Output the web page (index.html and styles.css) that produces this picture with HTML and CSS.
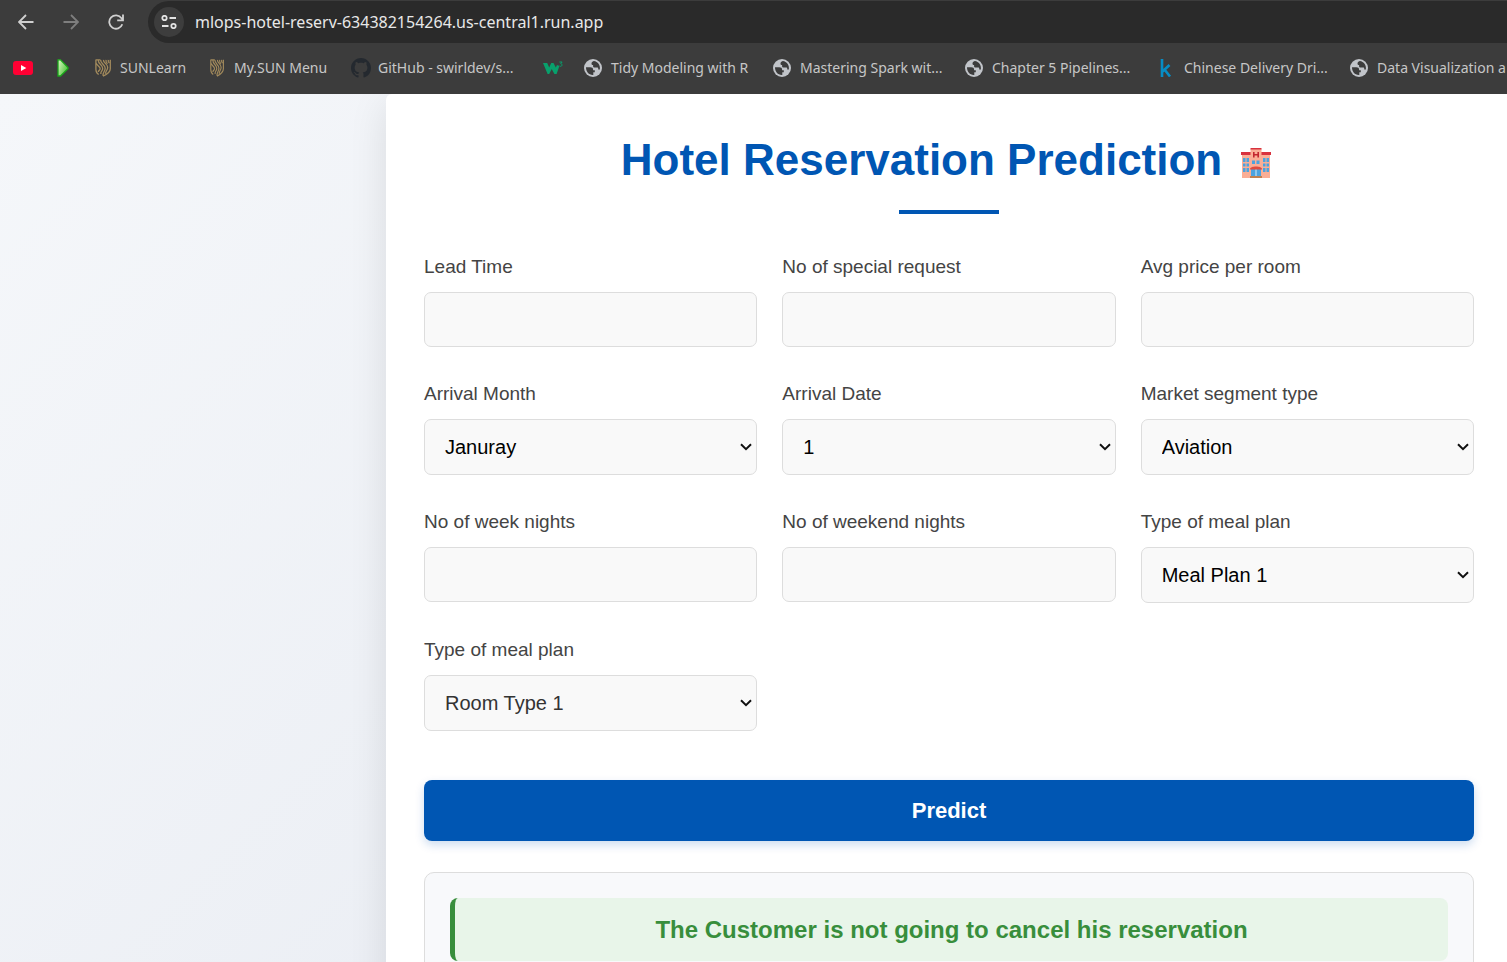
FILE: index.html
```html
<!DOCTYPE html>
<html lang="en">
<head>
<meta charset="utf-8">
<meta name="viewport" content="width=device-width, initial-scale=1">
<title>Hotel Reservation Prediction</title>
<link rel="stylesheet" href="styles.css">
</head>
<body>
<svg class="defs" aria-hidden="true">
  <symbol id="globe" viewBox="0 0 18 18">
    <circle cx="9" cy="9" r="9" fill="#c1c4c9"/>
    <path d="M2 8.200h4.200c2 0 2.900.9 2.900 2.200v.8h1.700v2h-1.500v2.700C5 16.200 1.900 12.700 2 8.200z" fill="#3c3c3c"/>
    <path d="M9.800 2.100c-1.500.5-2.300 1.300-2.300 2.500 0 1 .6 1.500 1.600 1.500v1.100c0 1 .7 1.400 1.700 1.400h2.400c.7 0 1 .4 1 1v.9h1.700C16.400 6.100 13.900 2.700 9.800 2.100z" fill="#3c3c3c"/>
  </symbol>
  <symbol id="crest" viewBox="0 0 16 18">
    <g fill="none" stroke="#a28a5c" stroke-width="1.300">
      <path d="M.5.800h5M.9 1v9.500c0 2.500 1 4 2.800 5M.9 3.500c.4 3 4.300 3.500 4.300 6.300 0 1.700-2 1.500-1.900 3.200M3.200 1c0 4.500 4.500 4.500 4.500 8.500 0 2.500-2.200 2.500-1.900 5.500M5.600 1c0 4 4.600 4.500 4.600 8.300 0 3.300-2.600 4-2.200 7.500M8.500.800c-.6 3 4.200 4 4.200 7.500 0 3.200-2.200 3.200-2.200 6.500M11 .800c-.3 2 .3 3 1.500 4M13.300.800c-.3 1.500 0 2.500 1 3M15.300.800v9c0 3-2.300 5.200-7.300 7.400"/>
    </g>
  </symbol>
</svg>
<header class="browser">
  <div class="toolbar">
    <button class="tool" type="button" aria-label="Back"><svg width="16" height="16" viewBox="0 0 16 16"><path d="M15.500 8H1.500M8 1 1 8l7 7" fill="none" stroke="#d0d0d0" stroke-width="1.800"/></svg></button>
    <button class="tool" type="button" aria-label="Forward"><svg width="16" height="16" viewBox="0 0 16 16"><path d="M.5 8h14M8 1l7 7-7 7" fill="none" stroke="#7e7e7e" stroke-width="1.800"/></svg></button>
    <button class="tool" type="button" aria-label="Reload"><svg width="16" height="16" viewBox="0 0 16 16"><path d="M14.300 10.200A6.700 6.700 0 1 1 13.500 4.200L15 5.800M15 .5v5.800H9.200" fill="none" stroke="#d0d0d0" stroke-width="1.800"/></svg></button>
    <div class="address">
      <button class="site-info" type="button" aria-label="Site information"><svg width="16" height="14" viewBox="0 0 16 14"><g fill="none" stroke="#e3e3e3" stroke-width="1.800"><circle cx="3.500" cy="3" r="2.200"/><path d="M8.500 3H15M1 11h6.500"/><circle cx="12.500" cy="11" r="2.200"/></g></svg></button>
      <input class="url" type="text" aria-label="Address" value="mlops-hotel-reserv-634382154264.us-central1.run.app">
    </div>
  </div>
  <nav class="bookmarks" aria-label="Bookmarks">
    <a class="youtube" href="#" aria-label="YouTube"><svg width="20" height="14" viewBox="0 0 20 14"><rect width="20" height="14" rx="3" fill="#ff0033"/><path d="M8 4l5.300 3L8 10z" fill="#fff"/></svg></a>
    <a class="play" href="#" aria-label="Play"><svg width="12" height="18" viewBox="0 0 12 18"><defs><linearGradient id="leaf" x1="0" x2="1" y1="0" y2="0.600"><stop offset="0" stop-color="#e2f9c8"/><stop offset="1" stop-color="#4dc33c"/></linearGradient></defs><path d="M1 .8h2.500L11 8.600v1.200L3.500 17H1z" fill="url(#leaf)" stroke="#19a519" stroke-width="1.300"/></svg></a>
    <a class="sunlearn" href="#"><svg width="16" height="18"><use href="#crest"/></svg>SUNLearn</a>
    <a class="sunmenu" href="#"><svg width="14" height="18" viewBox="0 0 16 18" preserveAspectRatio="none"><use href="#crest" width="16" height="18"/></svg>My.SUN Menu</a>
    <a class="github" href="#"><svg width="20" height="20" viewBox="0 0 16 16"><path fill="#24292f" d="M8 0C3.580 0 0 3.580 0 8c0 3.540 2.290 6.530 5.470 7.590.4.070.55-.17.55-.38 0-.19-.01-.82-.01-1.490-2.010.37-2.530-.49-2.690-.94-.09-.23-.48-.94-.82-1.130-.28-.15-.68-.52-.01-.53.63-.01 1.080.58 1.230.82.72 1.210 1.870.87 2.330.66.070-.52.280-.87.510-1.070-1.780-.2-3.640-.89-3.640-3.950 0-.87.310-1.590.82-2.150-.08-.2-.36-1.020.08-2.120 0 0 .67-.21 2.200.82.64-.18 1.320-.27 2-.27s1.360.09 2 .27c1.530-1.040 2.200-.82 2.200-.82.44 1.100.16 1.920.08 2.120.51.560.82 1.270.82 2.150 0 3.070-1.870 3.750-3.650 3.950.29.250.54.730.54 1.480 0 1.070-.01 1.930-.01 2.200 0 .21.150.46.550.38A8.010 8.010 0 0 0 16 8c0-4.420-3.580-8-8-8z"/></svg>GitHub - swirldev/s...</a>
    <a class="w3" href="#" aria-label="W3Schools"><svg width="20" height="14" viewBox="0 0 20 14"><path d="M0 2h4.200l2 4.500L8.200 2h2.300l2.300 4.500L14 4l2.400 1-2.800 8h-2.200L8.700 8l-2.500 5H4.600z" fill="#08a06c"/><path d="M16.400 1h2.700l-1.400 1.700c2 .2 1.600 2.600-.2 2.600-.6 0-1-.2-1.200-.6" fill="none" stroke="#08a06c" stroke-width="1"/></svg></a>
    <a class="globe" href="#"><svg width="18" height="18"><use href="#globe"/></svg>Tidy Modeling with R</a>
    <a class="globe" href="#"><svg width="18" height="18"><use href="#globe"/></svg>Mastering Spark wit...</a>
    <a class="globe last" href="#"><svg width="18" height="18"><use href="#globe"/></svg>Chapter 5 Pipelines...</a>
    <a class="kaggle" href="#"><svg width="12" height="18" viewBox="0 0 12 18"><path d="M2 0v18M2.500 12.500 9.500 6M4.500 10.500 10 17.500" fill="none" stroke="#078dc5" stroke-width="2.600"/></svg>Chinese Delivery Dri...</a>
    <a class="globe" href="#"><svg width="18" height="18"><use href="#globe"/></svg>Data Visualization a</a>
  </nav>
</header>
<main class="page">
  <section class="card">
    <h1>Hotel Reservation Prediction
      <svg width="30" height="30" viewBox="0 0 30 30" role="img" aria-label="Hotel"><path d="M1 5h9l1-4h8l1 4h9v25H1z" fill="#faae96"/><path d="M0 4h10v3H0zM20 4h10v3H20z" fill="#d8323e"/><path d="M9.500 1h11v9h-11z" fill="#faae96"/><path d="M9.500 0h11v1.500h-11z" fill="#d8323e"/><path d="M12.800 4v5.500M17.200 4v5.500M12.800 6.700h4.400" stroke="#c3262f" stroke-width="1.600"/><g fill="#4ba3df"><path d="M2 10h2.500v4H2zM5.500 10H8v4H5.500zM2 15.500h2.500v3H2zM5.500 15.500H8v3H5.500zM2 20h2.500v4H2zM5.500 20H8v4H5.500zM22 10h2.500v4H22zM25.500 10H28v4h-2.500zM22 15.500h2.500v3H22zM25.500 15.500H28v3h-2.500zM22 20h2.500v4H22zM25.500 20H28v4h-2.500zM11 12.500h3V16h-3zM15.500 12.500h3V16h-3z"/><path d="M10 21h10v7H10z"/></g><path d="M14.500 21h1v7h-1z" fill="#d8ecf4"/><path d="M9 21c0-3.500 12-3.500 12 0v.5H9z" fill="#e04b3e"/><path d="M9 28h12v2H9z" fill="#bf8150"/></svg>
    </h1>
    <form class="form" action="#">
      <div class="grid">
        <div class="field"><label for="lead">Lead Time</label><input id="lead" type="text"></div>
        <div class="field"><label for="requests">No of special request</label><input id="requests" type="text"></div>
        <div class="field"><label for="price">Avg price per room</label><input id="price" type="text"></div>
        <div class="field"><label for="month">Arrival Month</label><select id="month"><option>Januray</option></select></div>
        <div class="field"><label for="date">Arrival Date</label><select id="date"><option>1</option></select></div>
        <div class="field"><label for="segment">Market segment type</label><select id="segment"><option>Aviation</option></select></div>
        <div class="field"><label for="week">No of week nights</label><input id="week" type="text"></div>
        <div class="field"><label for="weekend">No of weekend nights</label><input id="weekend" type="text"></div>
        <div class="field"><label for="meal">Type of meal plan</label><select id="meal"><option>Meal Plan 1</option></select></div>
        <div class="field"><label for="room">Type of meal plan</label><select id="room" class="muted"><option>Room Type 1</option></select></div>
      </div>
      <button class="predict" type="submit">Predict</button>
    </form>
    <div class="result"><p>The Customer is not going to cancel his reservation</p></div>
  </section>
</main>
</body>
</html>
```
FILE: styles.css
```css
* { box-sizing: border-box; }
body {
  margin: 0;
  height: 100vh;
  display: flex;
  flex-direction: column;
  overflow: hidden;
  font-family: "Liberation Sans", Arial, sans-serif;
  color: #333;
}
.defs { display: none; }
button, input, select { font: inherit; margin: 0; }
svg { flex: none; }

.browser {
  flex: none;
  background: #3c3c3c;
  color: #c7c7c7;
  font-family: "Noto Sans", "Open Sans", sans-serif;
}
.toolbar { display: flex; align-items: center; padding: 1px 0 0 11px; }
.tool {
  display: flex;
  align-items: center;
  justify-content: center;
  width: 30px;
  height: 30px;
  margin-right: 15px;
  padding: 0;
  border: 0;
  background: none;
}
.address {
  flex: 1;
  display: flex;
  align-items: center;
  gap: 11px;
  height: 42px;
  margin-left: 2px;
  padding-left: 6px;
  border-radius: 21px 0 0 21px;
  background: #2a2a2a;
}
.site-info {
  display: flex;
  align-items: center;
  justify-content: center;
  width: 30px;
  height: 30px;
  padding: 0;
  border: 0;
  border-radius: 50%;
  background: #3d3d3d;
}
.url {
  flex: 1;
  min-width: 0;
  padding: 0;
  border: 0;
  outline: 0;
  background: none;
  color: #e8e8e8;
  font-size: 16px;
}
.bookmarks {
  display: flex;
  align-items: center;
  height: 51px;
  padding: 0 0 2px 13px;
  overflow: hidden;
  font-size: 14px;
}
.bookmarks a {
  flex: none;
  display: flex;
  align-items: center;
  color: inherit;
  text-decoration: none;
  white-space: nowrap;
}
.bookmarks .youtube { width: 44px; }
.bookmarks .play { width: 38px; }
.bookmarks .w3 { width: 41px; }
.bookmarks .sunlearn { width: 115px; gap: 9px; }
.bookmarks .sunmenu { width: 141px; gap: 10px; }
.bookmarks .github { width: 192px; gap: 7px; }
.bookmarks .globe { width: 189px; gap: 9px; }
.bookmarks .globe + .globe { width: 192px; }
.bookmarks .globe.last { width: 195px; }
.bookmarks .kaggle { width: 190px; gap: 12px; }

.page {
  flex: 1;
  min-height: 0;
  overflow: hidden;
  padding-left: 386px;
  background: linear-gradient(135deg, #f5f7fa, #e4e8f0);
}
.card {
  display: flex;
  flex-direction: column;
  padding: 34px 33px 38px 38px;
  border-radius: 6px 0 0 0;
  background: #fff;
  box-shadow: 0 10px 38px rgba(0, 0, 0, 0.1);
}
h1 {
  display: flex;
  flex-wrap: wrap;
  align-items: center;
  justify-content: center;
  column-gap: 19px;
  margin: 0 0 39px;
  color: #0056b3;
  font-size: 44px;
  line-height: 64px;
}
h1 svg { margin: 6px 6px 0 0; }
h1::after {
  content: "";
  flex: none;
  width: 100px;
  height: 4px;
  margin: 18px calc(50% - 50px) 0;
  background: #0056b3;
}
.grid {
  display: grid;
  grid-template-columns: repeat(3, minmax(0, 1fr));
  gap: 33px 25px;
}
.field { display: flex; flex-direction: column; gap: 11px; }
label { font-size: 19px; line-height: 28px; color: #444; }
.field input, .field select {
  width: 100%;
  height: 56px;
  border: 1px solid #ddd;
  border-radius: 7px;
  background-color: #f9f9f9;
  color: #000;
  font-size: 20px;
}
.field input { height: 55px; padding: 0 19px; }
.field select {
  appearance: none;
  padding: 0 30px 0 20px;
  background-image: url("data:image/svg+xml,%3Csvg xmlns='http://www.w3.org/2000/svg' width='12' height='8' viewBox='0 0 12 8'%3E%3Cpath d='M1 1.200 6 6.200 11 1.200' fill='none' stroke='%23111' stroke-width='2'/%3E%3C/svg%3E");
  background-position: right 4px center;
  background-repeat: no-repeat;
}
.field .muted { color: #333; }
.predict {
  width: 100%;
  height: 61px;
  margin: 49px 0 31px;
  padding: 0;
  border: 0;
  border-radius: 8px;
  background: #0056b3;
  box-shadow: 0 4px 10px rgba(0, 86, 179, 0.2);
  color: #fff;
  font-size: 22px;
  font-weight: 700;
}
.result {
  padding: 25px;
  border: 1px solid #ddd;
  border-radius: 10px;
  background: #f8f9fb;
}
.result p {
  margin: 0;
  padding: 16px;
  border-left: 5px solid #388e3c;
  border-radius: 8px;
  background: #e8f5e9;
  color: #388e3c;
  font-size: 24px;
  font-weight: 700;
  line-height: 31px;
  text-align: center;
}
```
